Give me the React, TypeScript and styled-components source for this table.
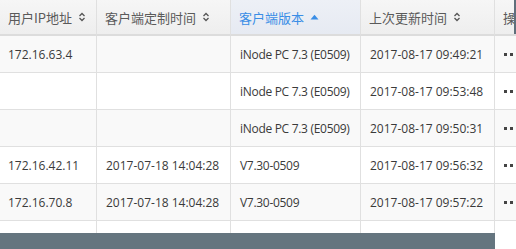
import React from "react";
import styled, { createGlobalStyle } from "styled-components";

const Global = createGlobalStyle`
  html, body { margin: 0; padding: 0; background: #fff; }
  body { width: 516px; height: 249px; overflow: hidden; }
`;

const Page = styled.div`
  width: 516px;
  height: 249px;
  display: flex;
  flex-direction: column;
  overflow: hidden;
  font-family: "Open Sans", "Noto Sans CJK SC", sans-serif;
`;

const TableArea = styled.div`
  height: 233px;
  overflow: hidden;
  flex: none;
`;

const Grid = styled.div`
  display: grid;
  grid-template-columns: 97px 134px 130px 134px 100px;
  width: 595px;
`;

const HeadCell = styled.div<{ $active?: boolean }>`
  box-sizing: border-box;
  height: 36px;
  display: flex;
  align-items: center;
  gap: 6px;
  padding: 0 8px;
  border-right: 1px solid #e0e0e0;
  border-bottom: 2px solid #dcdcdc;
  background: ${(p) =>
    p.$active
      ? "linear-gradient(#edf0f6, #e6eaf2)"
      : "linear-gradient(#f6f6f6, #eeeeee)"};
  color: ${(p) => (p.$active ? "#3a8ee6" : "#5a5a5a")};
  font-family: "Noto Sans CJK SC", sans-serif;
  font-size: 13px;
  white-space: nowrap;
  overflow: hidden;
  position: relative;
`;

const EdgeShadow = styled.span`
  position: absolute;
  left: 19px;
  top: 0;
  width: 2px;
  height: 34px;
  background: #5f6f7b;
`;

const Cell = styled.div<{ $odd: boolean }>`
  box-sizing: border-box;
  height: 37px;
  display: flex;
  align-items: center;
  padding: 0 8px 0 9px;
  border-right: 1px solid #e0e0e0;
  border-bottom: 1px solid #e0e0e0;
  background: ${(p) => (p.$odd ? "#f9f9f9" : "#ffffff")};
  color: #3a3a3a;
  font-size: 12px;
  white-space: nowrap;
  overflow: hidden;
`;

const FirstCell = styled(Cell)`
  padding-left: 8px;
`;

const VersionText = styled.span`
  letter-spacing: -0.3px;
`;

const Dots = styled.span`
  display: flex;
  gap: 3px;
  & > i {
    width: 3px;
    height: 3px;
    background: #444;
    display: block;
  }
`;

const Footer = styled.div`
  width: 495px;
  height: 16px;
  background: #65757f;
  flex: none;
`;

const SortIcon = () => (
  <svg width="8" height="10" viewBox="0 0 8 10" fill="none">
    <path d="M1.5 4 L4 1.5 L6.5 4" stroke="#555" strokeWidth="1.3" />
    <path d="M1.5 6 L4 8.5 L6.5 6" stroke="#555" strokeWidth="1.3" />
  </svg>
);

const SortUp = () => (
  <svg width="9" height="6" viewBox="0 0 9 6">
    <path d="M0.5 5.5 L4.5 0.8 L8.5 5.5 Z" fill="#3a8ee6" />
  </svg>
);

const headers = [
  { label: "用户IP地址", sort: "none" },
  { label: "客户端定制时间", sort: "none" },
  { label: "客户端版本", sort: "asc" },
  { label: "上次更新时间", sort: "none" },
];

const rows = [
  ["172.16.63.4", "", "iNode PC 7.3 (E0509)", "2017-08-17 09:49:21"],
  ["", "", "iNode PC 7.3 (E0509)", "2017-08-17 09:53:48"],
  ["", "", "iNode PC 7.3 (E0509)", "2017-08-17 09:50:31"],
  ["172.16.42.11", "2017-07-18 14:04:28", "V7.30-0509", "2017-08-17 09:56:32"],
  ["172.16.70.8", "2017-07-18 14:04:28", "V7.30-0509", "2017-08-17 09:57:22"],
  ["", "", "", ""],
];

export default function App() {
  return (
    <>
      <Global />
      <Page>
        <TableArea>
          <Grid>
            {headers.map((h) => (
              <HeadCell key={h.label} $active={h.sort === "asc"}>
                {h.label}
                {h.sort === "asc" ? <SortUp /> : <SortIcon />}
              </HeadCell>
            ))}
            <HeadCell>
              操作
              <EdgeShadow />
            </HeadCell>
            {rows.map((r, i) => (
              <React.Fragment key={i}>
                <FirstCell $odd={i % 2 === 0}>{r[0]}</FirstCell>
                <Cell $odd={i % 2 === 0}>{r[1]}</Cell>
                <Cell $odd={i % 2 === 0}>
                  <VersionText>{r[2]}</VersionText>
                </Cell>
                <Cell $odd={i % 2 === 0}>{r[3]}</Cell>
                <Cell $odd={i % 2 === 0}>
                  {i < 5 && (
                    <Dots>
                      <i />
                      <i />
                      <i />
                    </Dots>
                  )}
                </Cell>
              </React.Fragment>
            ))}
          </Grid>
        </TableArea>
        <Footer />
      </Page>
    </>
  );
}
